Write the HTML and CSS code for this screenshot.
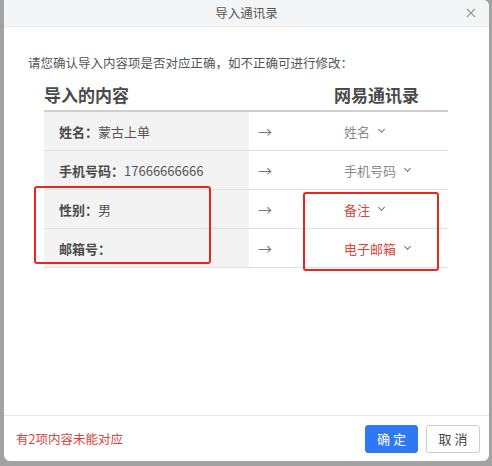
FILE: index.html
```html
<!DOCTYPE html>
<html lang="zh">
<head>
<meta charset="utf-8">
<link rel="stylesheet" href="styles.css">
</head>
<body>
<div class="dialog">
  <div class="header">
    <span class="title">导入通讯录</span>
    <span class="close">
      <svg width="10" height="10" viewBox="0 0 10 10"><path d="M1 1L9 9M9 1L1 9" stroke="#999" stroke-width="1.1" fill="none"/></svg>
    </span>
  </div>
  <div class="body">
    <p class="tip">请您确认导入内容项是否对应正确，如不正确可进行修改：</p>
    <div class="table">
      <div class="thead">
        <div class="c-left">导入的内容</div>
        <div class="c-mid"></div>
        <div class="c-right">网易通讯录</div>
      </div>
      <div class="row">
        <div class="c-left"><b>姓名：</b>蒙古上单</div>
        <div class="c-mid">→</div>
        <div class="c-right"><span class="sel">姓名<i class="chev"></i></span></div>
      </div>
      <div class="row">
        <div class="c-left"><b>手机号码：</b>17666666666</div>
        <div class="c-mid">→</div>
        <div class="c-right"><span class="sel">手机号码<i class="chev"></i></span></div>
      </div>
      <div class="row">
        <div class="c-left"><b>性别：</b>男</div>
        <div class="c-mid">→</div>
        <div class="c-right"><span class="sel red">备注<i class="chev"></i></span></div>
      </div>
      <div class="row">
        <div class="c-left"><b>邮箱号：</b></div>
        <div class="c-mid">→</div>
        <div class="c-right"><span class="sel red">电子邮箱<i class="chev"></i></span></div>
      </div>
    </div>
  </div>
  <div class="footer">
    <span class="warn">有2项内容未能对应</span>
    <div class="btns">
      <button class="btn primary">确 定</button>
      <button class="btn">取 消</button>
    </div>
  </div>
  <div class="mark mark1"></div>
  <div class="mark mark2"></div>
</div>
</body>
</html>
```
FILE: styles.css
```css
html, body { margin: 0; padding: 0; }
body {
  background: #a2a2a2;
  width: 492px;
  height: 466px;
  overflow: hidden;
  font-family: "Noto Sans CJK SC", "Microsoft YaHei", sans-serif;
}
.dialog {
  position: relative;
  margin-left: 4px;
  width: 485px;
  height: 461px;
  background: #fff;
  border-radius: 0 6px 6px 6px;
  overflow: hidden;
  display: flex;
  flex-direction: column;
}
.header {
  height: 26px;
  background: #f4f5f7;
  border-bottom: 1px solid #e8e8e8;
  display: flex;
  align-items: center;
  justify-content: center;
  position: relative;
  flex: none;
}
.title { font-size: 12.5px; color: #555; line-height: 26px; }
.close {
  position: absolute;
  right: 13px;
  top: 8px;
  width: 10px;
  height: 10px;
  display: block;
}
.close svg { display: block; }
.body { flex: 1; padding: 27px 0 0 24px; }
.tip {
  margin: 0;
  font-size: 12.5px;
  line-height: 18px;
  color: #555;
}
.table { margin-left: 16px; width: 404px; margin-top: 6px; }
.thead {
  display: flex;
  height: 32px;
  align-items: center;
  border-bottom: 2px solid #cfcfcf;
  font-size: 17px;
  font-weight: bold;
  color: #4a4a4a;
  white-space: nowrap;
}
.thead .c-left { background: none; padding-left: 0; }
.thead .c-mid { width: 85px; }
.row {
  display: flex;
  height: 38px;
  border-bottom: 1px solid #e1e1e1;
  font-size: 13px;
  color: #555;
}
.c-left {
  width: 205px;
  background: #f3f3f3;
  padding-left: 15px;
  box-sizing: border-box;
  display: flex;
  align-items: center;
  white-space: nowrap;
}
.c-left b { font-weight: 600; color: #4a4a4a; }
.c-mid {
  width: 95px;
  flex: none;
  padding-left: 9px;
  box-sizing: border-box;
  display: flex;
  align-items: center;
  color: #777;
  font-size: 14px;
}
.c-right {
  flex: 1;
  display: flex;
  align-items: center;
}
.sel { color: #8a8a8a; display: inline-flex; align-items: center; }
.sel.red { color: #d9443d; }
.chev {
  display: inline-block;
  width: 4px;
  height: 4px;
  border-right: 1px solid #777;
  border-bottom: 1px solid #777;
  transform: rotate(45deg);
  margin-left: 9px;
  margin-top: -4px;
}
.footer {
  flex: none;
  height: 45px;
  border-top: 1px solid #e8e8e8;
  display: flex;
  align-items: center;
  justify-content: space-between;
  padding: 0 9px 0 12px;
}
.warn { color: #d9443d; font-size: 12.5px; }
.btns { display: flex; gap: 8px; }
.btn {
  width: 54px;
  height: 28px;
  border: 1px solid #ccc;
  background: #fff;
  border-radius: 3px;
  font-family: inherit;
  font-size: 13px;
  color: #444;
  padding: 0;
}
.btn.primary { background: #2f78f4; border-color: #2f78f4; color: #fff; width: 53px; }
.mark {
  position: absolute;
  border: 2.5px solid #e8261f;
  border-radius: 3px;
  box-sizing: border-box;
}
.mark1 { left: 30px; top: 186px; width: 177px; height: 78px; }
.mark2 { left: 299px; top: 192px; width: 136px; height: 79px; }
```
